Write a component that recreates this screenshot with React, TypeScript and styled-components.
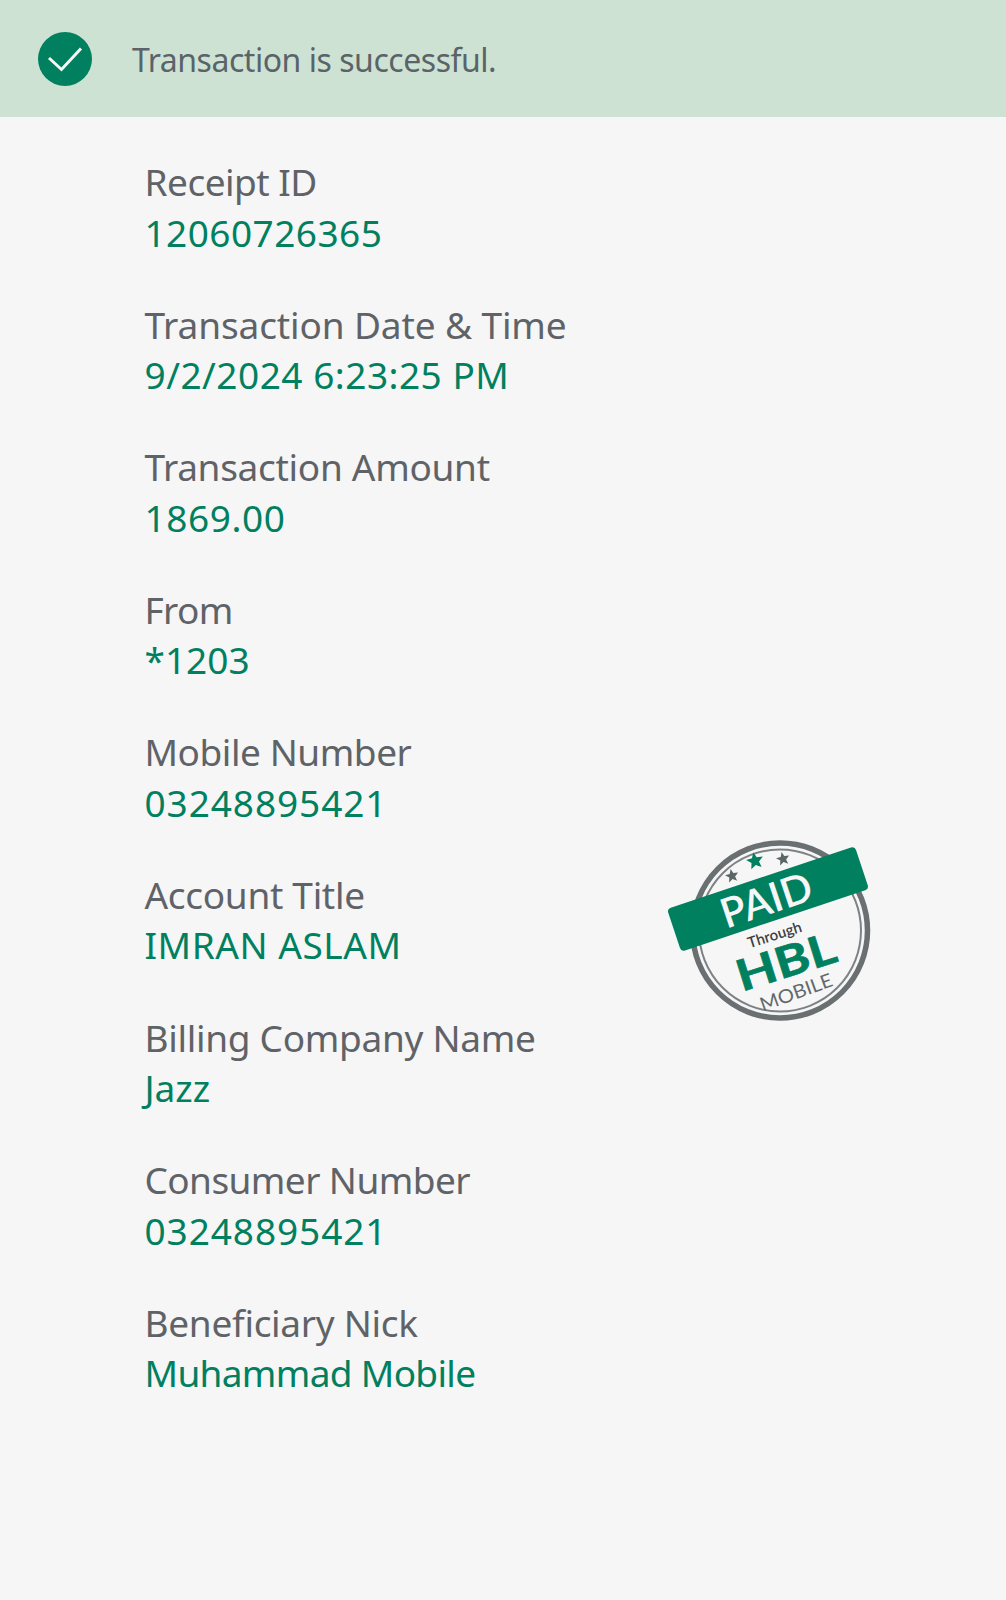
import { FC } from 'react';
import styled, { createGlobalStyle } from 'styled-components';

const rows = [
	{ label: 'Receipt ID', labelTracking: -0.5, value: '12060726365', tracking: 0.45 },
	{ label: 'Transaction Date & Time', labelTracking: -0.12, value: '9/2/2024 6:23:25 PM', tracking: 0.5 },
	{ label: 'Transaction Amount', labelTracking: -0.3, value: '1869.00', tracking: 0.6 },
	{ label: 'From', labelTracking: -0.6, value: '*1203', tracking: 0 },
	{ label: 'Mobile Number', labelTracking: -0.45, value: '03248895421', tracking: 0.92 },
	{ label: 'Account Title', labelTracking: -0.3, value: 'IMRAN ASLAM', tracking: 0.55 },
	{ label: 'Billing Company Name', labelTracking: -0.3, value: 'Jazz', tracking: 0 },
	{ label: 'Consumer Number', labelTracking: -0.58, value: '03248895421', tracking: 0.92 },
	{ label: 'Beneficiary Nick', labelTracking: -0.3, value: 'Muhammad Mobile', tracking: -0.68 },
];

const GREEN = '#00805f';
const GREY = '#5f6368';

const star = (cx: number, cy: number, r: number) => {
	const points: string[] = [];
	for (let i = 0; i < 10; i++) {
		const radius = i % 2 === 0 ? r : r * 0.45;
		const angle = (Math.PI / 5) * i - Math.PI / 2 - 0.2;
		points.push(
			`${(cx + radius * Math.cos(angle)).toFixed(1)},${(cy + radius * Math.sin(angle)).toFixed(1)}`,
		);
	}
	return points.join(' ');
};

const PaidStamp: FC = () => (
	<StampSvg viewBox="0 0 240 210" width="240" height="210">
		<circle cx="131" cy="110.5" r="87.5" fill="none" stroke="#6a6f72" strokeWidth="5.5" />
		<circle cx="131" cy="110.5" r="81" fill="none" stroke="#7d8286" strokeWidth="2" />
		<polygon points={star(106, 41, 9)} fill={GREEN} />
		<polygon points={star(134, 39, 7)} fill="#5c6664" />
		<polygon points={star(83, 56, 7)} fill="#5c6664" />
		<g transform="rotate(-18.5 119 79)">
			<rect x="20" y="56.5" width="198" height="45" rx="4" fill={GREEN} />
			<StampText x="117" y="94" textAnchor="middle" fontSize="41" fontWeight="600" fill="#f6f6f6">
				PAID
			</StampText>
		</g>
		<StampText
			transform="rotate(-17.5 126 116)"
			x="126"
			y="120"
			textAnchor="middle"
			fontSize="15"
			fontWeight="600"
			fill="#3c4042"
		>
			Through
		</StampText>
		<StampText
			transform="rotate(-17.5 137 142)"
			x="137"
			y="157"
			textAnchor="middle"
			fontSize="43"
			fontWeight="700"
			fill={GREEN}
			stroke={GREEN}
			strokeWidth="0.7"
			textLength="102"
			lengthAdjust="spacingAndGlyphs"
		>
			HBL
		</StampText>
		<StampText
			transform="rotate(-20 147 172)"
			x="147"
			y="179"
			textAnchor="middle"
			fontSize="19"
			fill="#63686c"
			textLength="76"
			lengthAdjust="spacingAndGlyphs"
		>
			MOBILE
		</StampText>
	</StampSvg>
);

const App: FC = () => (
	<>
		<GlobalStyle />
		<Page>
			<SuccessBar>
				<CheckBadge>
					<svg viewBox="0 0 54 54" width="54" height="54">
						<path
							d="M11 26 L23.5 37.5 L43 16.5"
							fill="none"
							stroke="#f4f7f5"
							strokeWidth="3"
						/>
					</svg>
				</CheckBadge>
				<SuccessText>Transaction is successful.</SuccessText>
			</SuccessBar>
			<Details>
				{rows.map(row => (
					<Row key={row.label}>
						<Label $tracking={row.labelTracking}>{row.label}</Label>
						<Value $tracking={row.tracking}>{row.value}</Value>
					</Row>
				))}
				<PaidStamp />
			</Details>
		</Page>
	</>
);

const GlobalStyle = createGlobalStyle`
	html, body {
		margin: 0;
		padding: 0;
		background: #f6f6f6;
	}
`;

const Page = styled.div`
	width: 1006px;
	height: 1600px;
	overflow: hidden;
	background: #f6f6f6;
	font-family: 'Noto Sans', 'Open Sans', sans-serif;
`;

const SuccessBar = styled.div`
	height: 117px;
	background: #cee2d4;
	display: flex;
	align-items: center;
	padding-left: 38px;
	gap: 40px;
`;

const CheckBadge = styled.div`
	width: 54px;
	height: 54px;
	margin-top: 1px;
	border-radius: 50%;
	background: ${GREEN};
	flex: none;
	& > svg {
		display: block;
	}
`;

const SuccessText = styled.div`
	font-size: 32px;
	letter-spacing: -0.47px;
	margin-top: 2px;
	color: #5a6468;
`;

const Details = styled.div`
	position: relative;
	padding: 40px 0 0 144.5px;
	display: flex;
	flex-direction: column;
	gap: 41.6px;
`;

const Row = styled.div`
	display: flex;
	flex-direction: column;
`;

const Label = styled.div<{ $tracking: number }>`
	font-size: 37px;
	line-height: 50.5px;
	letter-spacing: ${p => p.$tracking}px;
	color: ${GREY};
`;

const Value = styled.div<{ $tracking: number }>`
	font-size: 37px;
	line-height: 50.5px;
	letter-spacing: ${p => p.$tracking}px;
	color: ${GREEN};
`;

const StampSvg = styled.svg`
	position: absolute;
	left: 649px;
	top: 703px;
`;

const StampText = styled.text`
	font-family: 'Lato', 'Noto Sans', sans-serif;
`;

export default App;
